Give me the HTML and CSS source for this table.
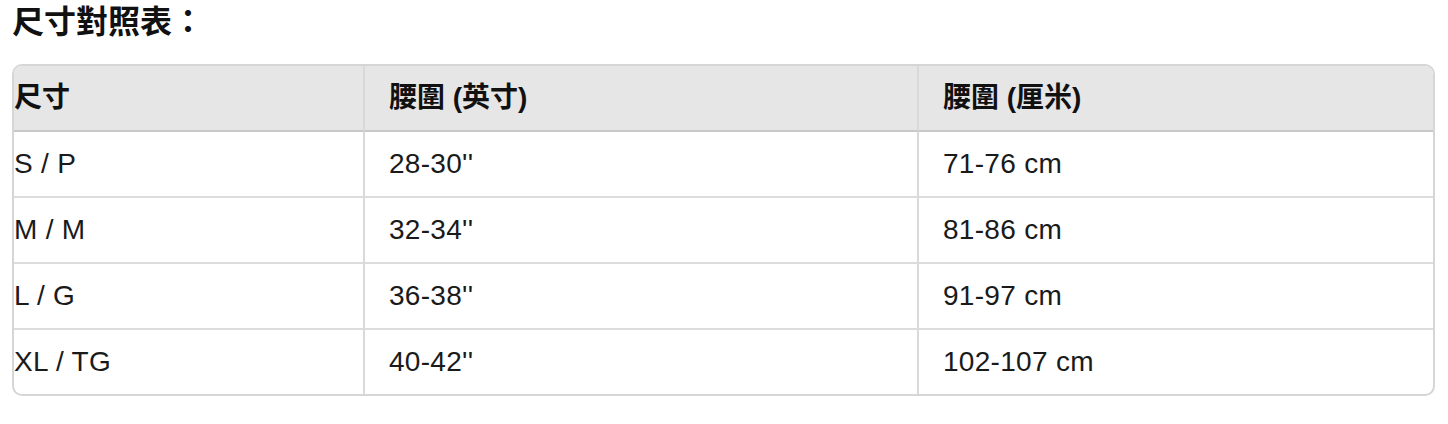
FILE: index.html
```html
<!DOCTYPE html>
<html lang="zh-Hant">
<head>
<meta charset="utf-8">
<title>尺寸對照表</title>
<link rel="stylesheet" href="styles.css">
</head>
<body>
<h3 class="title">尺寸對照表：</h3>
<table class="size-table">
  <colgroup>
    <col class="c1">
    <col class="c2">
    <col class="c3">
  </colgroup>
  <thead>
    <tr>
      <th>尺寸</th>
      <th>腰圍 (英寸)</th>
      <th>腰圍 (厘米)</th>
    </tr>
  </thead>
  <tbody>
    <tr><td>S / P</td><td>28-30''</td><td>71-76 cm</td></tr>
    <tr><td>M / M</td><td>32-34''</td><td>81-86 cm</td></tr>
    <tr><td>L / G</td><td>36-38''</td><td>91-97 cm</td></tr>
    <tr><td>XL / TG</td><td>40-42''</td><td>102-107 cm</td></tr>
  </tbody>
</table>
</body>
</html>
```
FILE: styles.css
```css
html, body {
  margin: 0;
  padding: 0;
  background: #ffffff;
}
body {
  padding: 4px 13px 0 12px;
  font-family: "Liberation Sans", "Noto Sans CJK TC", sans-serif;
  color: #1a1a1a;
}
.title {
  margin: 0 0 24px 0;
  font-size: 32px;
  line-height: 36px;
  font-weight: 700;
  color: #111;
}
.size-table {
  width: 1423px;
  table-layout: fixed;
  border-collapse: separate;
  border-spacing: 0;
  border: 2px solid #d6d6d6;
  border-radius: 10px;
  font-size: 28px;
  letter-spacing: 0.3px;
}
.size-table .c1 { width: 351px; }
.size-table .c2 { width: 554px; }
.size-table th,
.size-table td {
  text-align: left;
  padding: 0 0 0 24px;
  height: 64px;
  line-height: 34px;
  vertical-align: middle;
  border-right: 2px solid #d9d9d9;
  border-bottom: 2px solid #dcdcdc;
}
.size-table th:first-child,
.size-table td:first-child {
  padding-left: 0;
}
.size-table th:last-child,
.size-table td:last-child {
  border-right: none;
}
.size-table th {
  background: #e6e6e6;
  font-weight: 700;
  height: 64px;
  border-bottom-color: #c8c8c8;
  color: #111;
  letter-spacing: 0;
}
.size-table th:first-child { border-top-left-radius: 8px; }
.size-table th:last-child { border-top-right-radius: 8px; }
.size-table tbody tr:last-child td {
  border-bottom: none;
}
```
